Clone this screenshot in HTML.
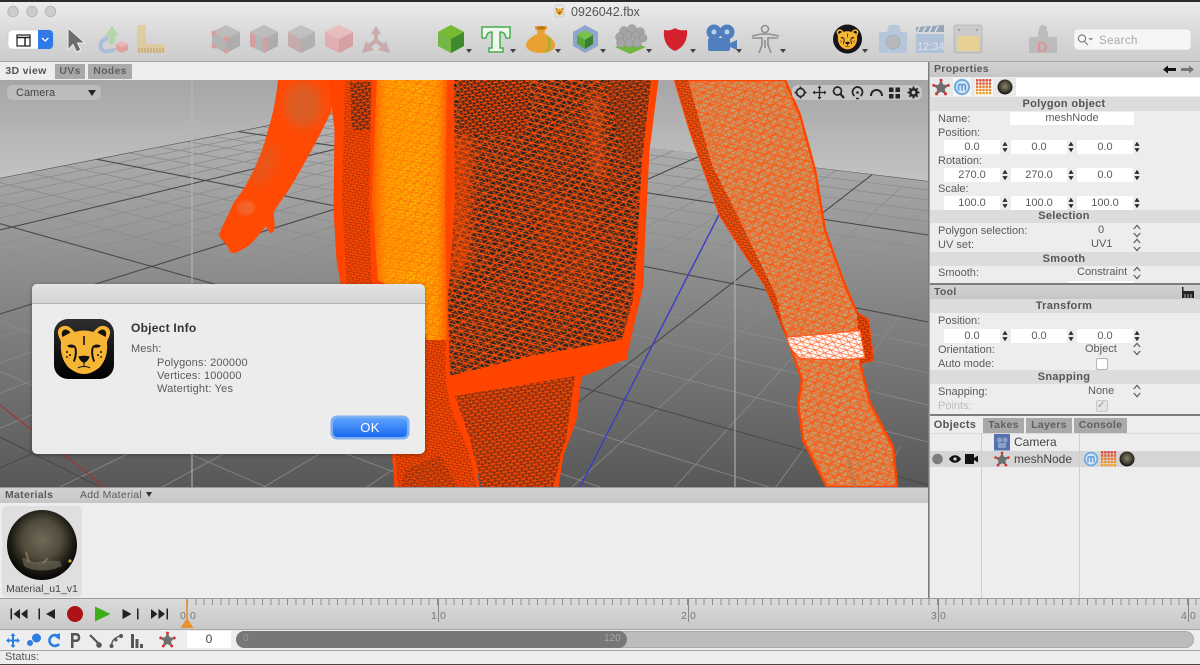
<!DOCTYPE html>
<html><head><meta charset="utf-8"><title>0926042.fbx</title>
<style>
html,body{margin:0;padding:0;background:#222;width:1200px;height:665px;overflow:hidden}
#w{position:relative;width:1200px;height:665px;overflow:hidden;background:#ebebeb;font-family:"Liberation Sans",sans-serif;filter:blur(.35px)}
#w div,#w span,#w svg.a{position:absolute}
.t{font:11px/14px "Liberation Sans",sans-serif;color:#5a5a5a;white-space:nowrap}
.b{font:bold 11px/14px "Liberation Sans",sans-serif;color:#555;white-space:nowrap;letter-spacing:.3px}
.h{left:930px;width:270px;background:#dcdcdc;text-align:center;padding-right:2px;box-sizing:border-box}
.f{background:#fff;text-align:center;font:11px/14px "Liberation Sans",sans-serif;color:#5a5a5a;height:14px}
.tab{background:#a9a9a9;text-align:center;font:bold 10.5px/15px "Liberation Sans",sans-serif;color:#5f5f5f;letter-spacing:.3px}
.hd{background:linear-gradient(#d2d2d2,#c6c6c6)}
</style></head><body>
<div id="w">
<!-- title + toolbar -->
<div style="left:0;top:0;width:1200px;height:61px;background:linear-gradient(#ececec,#d6d6d6 60%,#cdcdcd);border-top:2px solid #2b2b2b;box-sizing:border-box"></div>
<div style="left:0;top:61px;width:1200px;height:1px;background:#a5a5a5"></div>
<div class="t" style="left:571px;top:5px;font-size:12.5px;color:#555">0926042.fbx</div>
<div style="left:0;top:62px;width:928px;height:18px;background:#ededed"></div>
<div class="tab" style="left:0;top:64px;width:52px;height:15px;background:#ededed;color:#555">3D view</div>
<div class="tab" style="left:55px;top:64px;width:30px;height:15px">UVs</div>
<div class="tab" style="left:88px;top:64px;width:44px;height:15px">Nodes</div>

<!-- viewport -->
<svg class="a" style="left:0;top:0" width="1200" height="665" viewBox="0 0 1200 665">
<defs>
<filter id="sf" x="-40%" y="-40%" width="180%" height="180%"><feGaussianBlur stdDeviation="5"/></filter>
<filter id="sf2" x="-40%" y="-40%" width="180%" height="180%"><feGaussianBlur stdDeviation="1.6"/></filter>
<linearGradient id="sky" x1="0" y1="80" x2="0" y2="190" gradientUnits="userSpaceOnUse"><stop offset="0" stop-color="#a6a6a6"/><stop offset="1" stop-color="#c6c6c6"/></linearGradient>
<linearGradient id="floor" x1="0" y1="120" x2="0" y2="487" gradientUnits="userSpaceOnUse"><stop offset="0" stop-color="#b4b4b4"/><stop offset=".45" stop-color="#8a8a8a"/><stop offset="1" stop-color="#585858"/></linearGradient>
<clipPath id="vp"><rect x="0" y="80" width="928" height="407"/></clipPath>
<clipPath id="fl"><polygon points="341,111 928,181 928,487 0,487 0,178"/></clipPath>
<pattern id="mD" width="11" height="10" patternUnits="userSpaceOnUse" patternTransform="rotate(14)"><rect width="11" height="10" fill="#2a2725"/><path d="M0 0H11M0 5H11M0 10H11M0 0L5.5 5L11 0M0 10L5.5 5L11 10" stroke="#ff4a00" stroke-width="1" fill="none"/></pattern>
<pattern id="mD2" width="7" height="6.4" patternUnits="userSpaceOnUse" patternTransform="rotate(-8)"><rect width="7" height="6.4" fill="#2a2220"/><path d="M0 0H7M0 3.2H7M0 6.4H7M0 0L3.5 3.2L7 0M0 6.4L3.5 3.2L7 6.4" stroke="#ff4700" stroke-width=".85" fill="none"/></pattern>
<pattern id="mP" width="6" height="5.4" patternUnits="userSpaceOnUse" patternTransform="rotate(10)"><rect width="6" height="5.4" fill="#7a2a08"/><path d="M0 0H6M0 2.7H6M0 5.4H6M0 0L3 2.7L6 0M0 5.4L3 2.7L6 5.4" stroke="#ff4600" stroke-width="1" fill="none"/></pattern>
<pattern id="mY" width="7" height="6.2" patternUnits="userSpaceOnUse" patternTransform="rotate(6)"><rect width="7" height="6.2" fill="#fbc800"/><path d="M0 0H7M0 3.1H7M0 6.2H7M0 0L3.5 3.1L7 0M0 6.2L3.5 3.1L7 6.2" stroke="#ff8400" stroke-width=".8" fill="none"/></pattern>
<pattern id="mA" width="11" height="9.6" patternUnits="userSpaceOnUse" patternTransform="rotate(20)"><rect width="11" height="9.6" fill="#c39c6c"/><path d="M0 0H11M0 4.8H11M0 9.6H11M0 0L5.5 4.8L11 0M0 9.6L5.5 4.8L11 9.6" stroke="#f8601c" stroke-width=".8" fill="none"/></pattern>
<pattern id="mL" width="15" height="13" patternUnits="userSpaceOnUse" patternTransform="rotate(-31)"><path d="M0 0H15M0 6.5H15M0 13H15M0 0L7.5 6.5L15 0M0 13L7.5 6.5L15 13" stroke="#ff5510" stroke-width=".8" fill="none"/></pattern>
<pattern id="mW" width="10" height="8.6" patternUnits="userSpaceOnUse" patternTransform="rotate(16)"><rect width="10" height="8.6" fill="#fff"/><path d="M0 0H10M0 4.3H10M0 8.6H10M0 0L5 4.3L10 0M0 8.6L5 4.3L10 8.6" stroke="#ff6a30" stroke-width=".7" fill="none"/></pattern>
<linearGradient id="yG" x1="372" y1="0" x2="448" y2="0" gradientUnits="userSpaceOnUse"><stop offset="0" stop-color="#ff5500" stop-opacity=".95"/><stop offset=".2" stop-color="#ff8c00" stop-opacity=".5"/><stop offset=".55" stop-color="#ff9500" stop-opacity=".18"/><stop offset=".85" stop-color="#ff8000" stop-opacity=".4"/><stop offset="1" stop-color="#ff4a00" stop-opacity=".9"/></linearGradient>
<radialGradient id="ball" cx=".5" cy=".42" r=".55"><stop offset="0" stop-color="#6f6a58"/><stop offset=".5" stop-color="#504b3b"/><stop offset=".82" stop-color="#1c1a14"/><stop offset="1" stop-color="#0a0907"/></radialGradient>
<radialGradient id="ball2" cx=".5" cy=".45" r=".55"><stop offset="0" stop-color="#8a836a"/><stop offset=".6" stop-color="#4a4536"/><stop offset="1" stop-color="#0f0e0b"/></radialGradient>
<symbol id="star" viewBox="0 0 20 20"><polygon points="10,1.5 12.6,7.3 18.8,8 14.2,12.2 15.5,18.5 10,15.3 4.5,18.5 5.8,12.2 1.2,8 7.4,7.3" fill="#6e6e6e"/><g fill="#dc2f2f"><circle cx="10" cy="2.5" r="1.7"/><circle cx="18" cy="8.2" r="1.7"/><circle cx="15" cy="17.6" r="1.7"/><circle cx="5" cy="17.6" r="1.7"/><circle cx="2" cy="8.2" r="1.7"/></g></symbol>
<symbol id="micon" viewBox="0 0 20 20"><circle cx="10" cy="10" r="9" fill="#6fa9dd"/><circle cx="10" cy="10" r="6.8" fill="#d4e6f6"/><path d="M6.2 14V7.5M6.2 9C6.2 6.5 10 6.5 10 9V14M10 9C10 6.5 13.8 6.5 13.8 9V14" stroke="#5c9ad6" stroke-width="1.7" fill="none"/></symbol>
<symbol id="gridi" viewBox="0 0 18 18"><g stroke-width="2.6" stroke-dasharray="2.6 1" fill="none"><path d="M0 1.5H18" stroke="#df3b2e"/><path d="M0 5.1H18" stroke="#e5562a"/><path d="M0 8.7H18" stroke="#ec7326"/><path d="M0 12.3H18" stroke="#f08c22"/><path d="M0 15.9H18" stroke="#f4a01f"/></g></symbol>
<symbol id="spin" viewBox="0 0 8 14"><path d="M4 0L7.5 5.5H.5ZM4 14L.5 8.5H7.5Z" fill="#2b2b2b"/></symbol>
<symbol id="ud" viewBox="0 0 8 14"><path d="M.8 5L4 1.4L7.2 5M.8 9L4 12.6L7.2 9" fill="none" stroke="#666" stroke-width="1.3"/></symbol>
<symbol id="tri" viewBox="0 0 6 4"><path d="M0 0H6L3 4Z" fill="#444"/></symbol>
<symbol id="chee" viewBox="0 0 60 60">
<path d="M13 7C7 6 3 10 4 15C5 19 7 21 7 24C6 34 9 42 14 48C20 53 25 55 30 55C35 55 40 53 46 48C51 42 54 34 53 24C53 21 55 19 56 15C57 10 53 6 47 7C43 8 41 12 39 13C33 11 27 11 21 13C19 12 17 8 13 7Z" fill="#f6b535"/>
<path d="M12 10.5C8 10.5 7 14 8.5 18C11 16.5 14 15 16.5 13.5C15 12 13.5 10.5 12 10.5ZM48 10.5C52 10.5 53 14 51.5 18C49 16.5 46 15 43.5 13.5C45 12 46.5 10.5 48 10.5Z" fill="#111"/>
<path d="M29.2 17H30.8V26H29.2Z" fill="#111"/>
<path d="M13 27C15.5 25 19 25 22 27.5C20 29 16 29.5 13 27ZM47 27C44.5 25 41 25 38 27.5C40 29 44 29.5 47 27Z" fill="#111"/>
<path d="M20 28C21.5 32 21 37 19 42L20.5 43C23 38 23.5 32 22 28ZM40 28C38.5 32 39 37 41 42L39.5 43C37 38 36.5 32 38 28Z" fill="#111"/>
<path d="M24.5 37.5C27 36.5 33 36.5 35.5 37.5C35 40.5 32.5 43 30 44C27.5 43 25 40.5 24.5 37.5Z" fill="#111"/>
<path d="M30 44V47M24 49C27 47 33 47 36 49" stroke="#111" stroke-width="1.1" fill="none"/>
<g fill="#111"><circle cx="13" cy="33" r="1"/><circle cx="16" cy="36" r="1"/><circle cx="13" cy="38" r=".9"/><circle cx="47" cy="33" r="1"/><circle cx="44" cy="36" r="1"/><circle cx="47" cy="38" r=".9"/></g>
</symbol>
<linearGradient id="iconbg" x1="0" y1="0" x2="0" y2="1"><stop offset="0" stop-color="#2e2e2e"/><stop offset=".6" stop-color="#111"/><stop offset="1" stop-color="#000"/></linearGradient>
</defs>

<g clip-path="url(#vp)">
<rect x="0" y="80" width="928" height="407" fill="url(#sky)"/>
<polygon points="341,111 928,181 928,487 0,487 0,178" fill="url(#floor)"/>
<g clip-path="url(#fl)" fill="none">
<path stroke="#8b8b8b" stroke-width=".8" d="M0 72.8L928 190M0 77.9L928 200M0 83.5L928 211M0 89.1L928 222M0 102.9L928 249M0 110.6L928 264M0 119.3L928 281M0 129.1L928 300M0 152.6L928 346M0 166.4L928 373M0 182.8L928 405M0 201.7L928 442M0 249.8L769 487M0 282L600 487M0 321.4L433 487M0 371.5L266 487"/>
<path stroke="#8b8b8b" stroke-width=".8" d="M900 3.4L0 187M900 5.5L0 196M900 8L0 207M900 10.4L0 218M900 16.3L0 244M900 19.5L0 258M900 23.3L0 275M900 27.3L0 293M900 37.3L0 337M900 43.1L0 363M900 50L0 393M900 57.7L0 428M900 77.6L60 487M900 90.7L162 487M900 106.7L264 487M900 127L367 487M900 188.4L572 487M900 239L675 487M900 315L776 487M900 447L879 487"/>
<path stroke="#4a4a4a" stroke-width="1.1" d="M0 68.2L928 181M0 95.8L928 235M0 140.3L928 322M0 223.7L928 485M0 437L100 487M900 1.4L0 178M900 13.1L0 230M900 32L0 314M900 66.8L0 468M900 153L469 487"/>
</g>
<path d="M192 80V487M735 80V487" stroke="#b9b9b9" stroke-width="1" fill="none"/>
<path d="M0 405L105 487" stroke="#a33232" stroke-width="1.1" fill="none"/>
<path d="M725 203L580 487" stroke="#3c3cc8" stroke-width="1.4" fill="none"/>

<!-- left arm -->
<path d="M278 80C276 100 272 118 268 130C262 155 252 175 243 190L233 204C229 214 222 226 219 235C222 242 228 244 230 252C236 255 240 250 245 248C250 246 258 236 266 226C268 232 272 236 274 230C276 224 273 218 274 212C278 204 285 196 290 188C304 165 320 135 331 112L335 80Z" fill="#ff4a04"/>
<g filter="url(#sf)"><ellipse cx="303" cy="105" rx="18" ry="22" fill="#a87a58" opacity=".42"/><ellipse cx="265" cy="165" rx="8" ry="22" fill="#a87a58" opacity=".28" transform="rotate(25 265 165)"/></g>
<ellipse cx="246" cy="208" rx="9" ry="7" fill="#e88a68" opacity=".4" filter="url(#sf2)"/>
<!-- torso + legs -->
<path d="M330 80L336 130L335 210L338 260L345 300L355 340L385 400L393 440L396 487H473L478 472L482 487H557L562 455L575 420L580 376L625 358L628 345L636 310L642 285L643 250L648 150L657 80Z" fill="#ff4500"/>
<path d="M345 80H372L369 200L372 290H347L342 200Z" fill="url(#mP)" opacity=".7"/>
<path d="M350 82H371L370 130H352Z" fill="url(#mD2)" opacity=".85"/>
<path d="M377 80H447L445 200L447 340H427L415 300L378 280L372 200Z" fill="url(#mY)"/>
<path d="M377 80H447L445 200L447 340H427L415 300L378 280L372 200Z" fill="url(#mL)" opacity=".7"/>
<path d="M377 80H447L445 200L447 340H427L415 300L378 280L372 200Z" fill="url(#yG)"/>
<g filter="url(#sf)"><ellipse cx="408" cy="130" rx="15" ry="38" fill="#ff8a00" opacity=".3"/><ellipse cx="405" cy="245" rx="18" ry="28" fill="#ff8000" opacity=".32"/></g>
<path d="M454 80H651L642 160L637 250L633 300L622 340L530 356L450 376L448 300L455 200Z" fill="url(#mD)"/>
<path d="M454 80H651L642 160L637 250L633 300L622 340L530 356L450 376L448 300L455 200Z" fill="url(#mL)" opacity=".65"/>
<path d="M458 80H530L525 135L462 135Z" fill="url(#mD2)"/>
<path d="M605 80H651L642 160L625 160Z" fill="url(#mD2)" opacity=".75"/>
<g filter="url(#sf)"><path d="M450 135L472 135L470 260L450 290Z" fill="#ff4a00" opacity=".55"/><path d="M590 95L600 95L604 180L592 175Z" fill="#ff5a1a" opacity=".5"/><path d="M540 190L600 210L590 300L530 300Z" fill="#ff4a00" opacity=".12"/></g>
<path d="M380 380L427 340H447L450 395L470 450L476 487H396Z" fill="url(#mP)" opacity=".8"/>
<path d="M455 396L575 376L566 440L553 487H482L470 440Z" fill="url(#mD2)" opacity=".68"/>
<path d="M405 470L440 455L458 487H402Z" fill="url(#mD2)" opacity=".4"/>
<path d="M450 392C480 378 560 372 627 358M447 340C448 360 446 380 450 395C452 410 462 430 470 450C474 465 476 475 478 487" stroke="#ff4300" stroke-width="3.4" fill="none"/>
<path d="M330 80L336 130L335 210L338 260L345 300L355 340L385 400L393 440L396 487M657 80L648 150L643 250L642 285L636 310L628 345L625 358L580 376L575 420L562 455L557 487" stroke="#ff4300" stroke-width="3" fill="none"/>
<!-- right arm -->
<path d="M675 80L690 130L720 215L765 285L787 337L802 380L798 403L803 440L827 487H897L893 447L870 403L860 363L873 360L868 320L857 313L843 280L825 230L815 170L800 115L785 80Z" fill="url(#mA)"/>
<path d="M675 80L690 130L720 215L765 285L787 337L802 380L798 403L803 440L827 487H897L893 447L870 403L860 363L873 360L868 320L857 313L843 280L825 230L815 170L800 115L785 80Z" fill="url(#mL)" stroke="#ff4500" stroke-width="2.4"/>
<path d="M675 80L690 130L720 215L765 285L785 335L776 295L742 225L712 165L688 80Z" fill="url(#mP)" opacity=".85"/>
<path d="M857 313L868 320L873 360L860 363L858 330Z" fill="url(#mP)"/>
<path d="M787 337C810 335 840 333 860 330L865 358C845 360 815 360 800 358C792 352 788 345 787 337Z" fill="url(#mW)" stroke="#ff5a20" stroke-width="1.2"/>
<path d="M848 458C850 470 852 478 856 487" stroke="#a87b4e" stroke-width="3" fill="none" opacity=".6"/>
</g>
<rect x="0" y="487" width="928" height="1" fill="#9a9a9a"/>
<!-- vertical separators -->
<rect x="928" y="62" width="1.6" height="537" fill="#7c7c7c"/>
</svg>

<!-- camera dropdown -->
<div style="left:7px;top:85px;width:94px;height:15px;background:#bcbcbc;border-radius:5px"></div>
<div class="t" style="left:16px;top:86px;color:#444">Camera</div>
<div style="left:88px;top:90px;width:0;height:0;border-left:4.5px solid transparent;border-right:4.5px solid transparent;border-top:6px solid #222"></div>
<div style="left:792px;top:85px;width:130px;height:15px;background:#c9c9c9;border-radius:6px;opacity:.88"></div>

<!-- right panel -->
<div style="left:930px;top:62px;width:270px;height:536px;background:#ededed"></div>
<div class="hd" style="left:930px;top:62px;width:270px;height:15px"></div>
<div class="b" style="left:934px;top:62px;font-size:10.5px;color:#5a5a5a">Properties</div>
<div style="left:1016px;top:78px;width:184px;height:18px;background:#fff"></div>
<div style="left:930px;top:78px;width:86px;height:18px;background:#e9e9e9"></div>
<div style="left:953px;top:78px;width:18px;height:18px;background:#f6f6f6"></div>
<div style="left:975px;top:78px;width:18px;height:18px;background:#f6f6f6"></div>
<div class="h b" style="top:97px;height:14px">Polygon object</div>
<div class="t" style="left:938px;top:112px">Name:</div>
<div class="f" style="left:1010px;top:112px;width:124px;height:13px;line-height:13px">meshNode</div>
<div class="t" style="left:938px;top:126px">Position:</div>
<div class="f" style="left:944px;top:140px;width:56px">0.0</div><div class="f" style="left:1011px;top:140px;width:56px">0.0</div><div class="f" style="left:1077px;top:140px;width:56px">0.0</div>
<div class="t" style="left:938px;top:154px">Rotation:</div>
<div class="f" style="left:944px;top:168px;width:56px">270.0</div><div class="f" style="left:1011px;top:168px;width:56px">270.0</div><div class="f" style="left:1077px;top:168px;width:56px">0.0</div>
<div class="t" style="left:938px;top:182px">Scale:</div>
<div class="f" style="left:944px;top:196px;width:56px">100.0</div><div class="f" style="left:1011px;top:196px;width:56px">100.0</div><div class="f" style="left:1077px;top:196px;width:56px">100.0</div>
<div class="h b" style="top:210px;height:13px;line-height:13px">Selection</div>
<div class="t" style="left:938px;top:224px">Polygon selection:</div>
<div class="t" style="left:1098px;top:223px">0</div>
<div class="t" style="left:938px;top:238px">UV set:</div>
<div class="t" style="left:1091px;top:237px">UV1</div>
<div class="h b" style="top:252px;height:14px">Smooth</div>
<div class="t" style="left:938px;top:266px">Smooth:</div>
<div class="t" style="left:1077px;top:265px">Constraint</div>
<div style="left:1068px;top:281px;width:66px;height:2px;background:#fff"></div>
<div style="left:930px;top:283px;width:270px;height:2px;background:#7c7c7c"></div>

<div class="hd" style="left:930px;top:285px;width:270px;height:14px"></div>
<div class="b" style="left:934px;top:285px;font-size:10.5px;color:#5a5a5a">Tool</div>
<div class="h b" style="top:299px;height:14px">Transform</div>
<div class="t" style="left:938px;top:314px">Position:</div>
<div class="f" style="left:944px;top:329px;width:56px">0.0</div><div class="f" style="left:1011px;top:329px;width:56px">0.0</div><div class="f" style="left:1077px;top:329px;width:56px">0.0</div>
<div class="t" style="left:938px;top:343px">Orientation:</div>
<div class="t" style="left:1085px;top:342px">Object</div>
<div class="t" style="left:938px;top:357px">Auto mode:</div>
<div style="left:1096px;top:358px;width:10px;height:10px;background:#fff;border:1px solid #b5b5b5;border-radius:2px"></div>
<div class="h b" style="top:370px;height:14px">Snapping</div>
<div class="t" style="left:938px;top:385px">Snapping:</div>
<div class="t" style="left:1088px;top:384px">None</div>
<div class="t" style="left:938px;top:399px;color:#bcbcbc">Points:</div>
<div style="left:1096px;top:400px;width:10px;height:10px;background:#e4e4e4;border:1px solid #c8c8c8;border-radius:2px"></div>
<div class="t" style="left:1097px;top:399px;color:#999;font-size:10px">✓</div>
<div style="left:930px;top:414px;width:270px;height:2px;background:#7c7c7c"></div>

<div class="tab" style="left:930px;top:418px;width:50px;height:15px;background:#ededed;color:#555;font-size:11px">Objects</div>
<div class="tab" style="left:983px;top:418px;width:41px;height:15px">Takes</div>
<div class="tab" style="left:1026px;top:418px;width:46px;height:15px">Layers</div>
<div class="tab" style="left:1074px;top:418px;width:53px;height:15px">Console</div>
<div style="left:930px;top:433px;width:270px;height:1px;background:#dcdcdc"></div>
<div style="left:930px;top:451px;width:270px;height:16px;background:#d5d5d5"></div>
<div style="left:981px;top:433px;width:1px;height:165px;background:#cfcfcf"></div>
<div style="left:1079px;top:433px;width:1px;height:165px;background:#cfcfcf"></div>
<div class="t" style="left:1014px;top:435px;font-size:12px;color:#444">Camera</div>
<div class="t" style="left:1014px;top:452px;font-size:12px;color:#444">meshNode</div>

<!-- materials -->
<div class="hd" style="left:0;top:488px;width:928px;height:15px"></div>
<div class="b" style="left:5px;top:488px;color:#5a5a5a;font-size:10.5px">Materials</div>
<div class="t" style="left:80px;top:488px;font-size:10.5px;letter-spacing:.25px">Add Material</div>
<div style="left:146px;top:492px;width:0;height:0;border-left:3.5px solid transparent;border-right:3.5px solid transparent;border-top:5px solid #333"></div>
<div style="left:0;top:503px;width:928px;height:95px;background:#ededed"></div>
<div style="left:2px;top:506px;width:80px;height:91px;background:#dfdfdf;border-radius:5px"></div>
<div class="t" style="left:2px;top:582px;width:80px;text-align:center;font-size:10.5px;color:#444">Material_u1_v1</div>

<!-- timeline -->
<div style="left:0;top:598px;width:1200px;height:31px;background:linear-gradient(#dadada,#c9c9c9);border-top:1px solid #9b9b9b;box-sizing:border-box"></div>
<div style="left:187px;top:599px;width:1013px;height:6px;background:repeating-linear-gradient(90deg,#8b8b8b 0,#8b8b8b 1px,transparent 1px,transparent 8.333px)"></div>
<div style="left:437.5px;top:599px;width:1px;height:23px;background:#888"></div>
<div style="left:687.5px;top:599px;width:1px;height:23px;background:#888"></div>
<div style="left:937.5px;top:599px;width:1px;height:23px;background:#888"></div>
<div style="left:1187.5px;top:599px;width:1px;height:23px;background:#888"></div>
<div class="t" style="left:431px;top:609px;font-size:10.5px;color:#777">1</div><div class="t" style="left:440px;top:609px;font-size:10.5px;color:#777">0</div>
<div class="t" style="left:681px;top:609px;font-size:10.5px;color:#777">2</div><div class="t" style="left:690px;top:609px;font-size:10.5px;color:#777">0</div>
<div class="t" style="left:931px;top:609px;font-size:10.5px;color:#777">3</div><div class="t" style="left:940px;top:609px;font-size:10.5px;color:#777">0</div>
<div class="t" style="left:1181px;top:609px;font-size:10.5px;color:#777">4</div><div class="t" style="left:1190px;top:609px;font-size:10.5px;color:#777">0</div>
<div class="t" style="left:180px;top:609px;font-size:10.5px;color:#777">0</div><div class="t" style="left:190px;top:609px;font-size:10.5px;color:#777">0</div>
<div style="left:0;top:629px;width:1200px;height:1px;background:#a8a8a8"></div>
<div style="left:0;top:630px;width:1200px;height:20px;background:#ededed"></div>
<div class="f" style="left:187px;top:631px;width:44px;height:17px;font-size:12px;line-height:17px;color:#444">0</div>
<div style="left:236px;top:631px;width:958px;height:17px;background:#bcbcbc;border:1px solid #aaa;border-radius:9px;box-sizing:border-box"></div>
<div style="left:236px;top:631px;width:391px;height:17px;background:#777;border-radius:9px"></div>
<div class="t" style="left:243px;top:632px;font-size:10px;color:#969696">0</div>
<div class="t" style="left:604px;top:632px;font-size:10px;color:#a8a8a8">120</div>
<div style="left:0;top:650px;width:1200px;height:1px;background:#a8a8a8"></div>
<div style="left:0;top:651px;width:1200px;height:13px;background:#ededed"></div>
<div class="t" style="left:5px;top:650px;color:#555">Status:</div>
<div style="left:0;top:664px;width:1200px;height:1px;background:#4a4a4a"></div>

<!-- icons overlay -->
<svg class="a" style="left:0;top:0" width="1200" height="665" viewBox="0 0 1200 665">
<!-- traffic -->
<g fill="#cdcdcd" stroke="#b6b6b6"><circle cx="13" cy="11.5" r="5.2"/><circle cx="32" cy="11.5" r="5.2"/><circle cx="50.5" cy="11.5" r="5.2"/></g>
<use href="#chee" x="555" y="6" width="9" height="11"/>
<rect x="555" y="5" width="9" height="12" rx="1.5" fill="none" stroke="#bbb" stroke-width=".6"/>
<!-- segment -->
<rect x="8" y="30" width="45" height="19" rx="4" fill="#fff" stroke="#c4c4c4" stroke-width=".6"/>
<path d="M38 30H49a4 4 0 0 1 4 4V45a4 4 0 0 1-4 4H38Z" fill="#2f79e8"/>
<path d="M42 38l3.2 3l3.2-3" stroke="#fff" stroke-width="1.2" fill="none"/>
<rect x="17" y="35" width="13" height="11" fill="#fff" stroke="#1c1c1c" stroke-width="1.2"/>
<path d="M17 37.5H30M25 37.5V46" stroke="#1c1c1c" stroke-width="1.4"/>
<!-- arrow -->
<path d="M68 28L68 50L73 44.5L76.5 52L81 50L77.5 43H85Z" fill="#6c6c6c" stroke="#efefef" stroke-width="1"/>
<!-- disabled group -->
<g opacity=".72">
<path d="M112 26L119 36H115V44H109V36H105Z" fill="#a7d49a"/>
<path d="M108 38C100 40 98 48 104 51C108 52 112 50 115 50" fill="none" stroke="#9cb7d8" stroke-width="4"/>
<path d="M122 41L128 44V50L122 53L116 50V44Z" fill="#e88f8f"/><path d="M116 44L122 47L128 44L122 41Z" fill="#f0b0b0"/>
<path d="M137 25H146V44H165V53H137Z" fill="#e4c88e"/>
<path d="M139 53V48M142 53V48M145 53V48M148 53V48M151 53V48M154 53V48M157 53V48M160 53V48M163 53V48" stroke="#a98a50" stroke-width="1"/>
<path d="M226 25L240 32V46L226 53L212 46V32Z" fill="#a9a9a9"/><path d="M226 25L240 32L226 39L212 32Z" fill="#b2b2b2"/><path d="M240 32V46L226 53V39Z" fill="#9f9f9f"/>
<g fill="#d88c8c"><circle cx="214" cy="33" r="2.6"/><circle cx="226" cy="39" r="2.6"/><circle cx="214" cy="46" r="2.6"/><circle cx="226" cy="51" r="2.6"/></g>
<path d="M264 25L278 32V46L264 53L250 46V32Z" fill="#a9a9a9"/><path d="M264 25L278 32L264 39L250 32Z" fill="#b2b2b2"/><path d="M278 32V46L264 53V39Z" fill="#9f9f9f"/>
<path d="M250 32L255 34.5V48.5L250 46ZM263 38V53L267 51V37Z" fill="#d88c8c"/>
<path d="M301 25L315 32V46L301 53L288 46V32Z" fill="#b4b4b4"/><path d="M301 25L315 32L301 39L288 32Z" fill="#b8b8b8"/><path d="M315 32V46L301 53V39Z" fill="#a3a3a3"/><path d="M288 32L301 39V53L288 46Z" fill="#c09c9c"/>
<path d="M339 25L353 32V46L339 53L325 46V32Z" fill="#e8a0a3"/><path d="M339 25L353 32L339 39L325 32Z" fill="#efb4b6"/><path d="M353 32V46L339 53V39Z" fill="#d98f92"/>
<path d="M376 26L381 34H378V40L384 44L386 41L390 53L378 50L381 47L376 43L371 47L374 50L362 53L366 41L368 44L374 40V34H371Z" fill="#c79a9d"/>
</g>
<!-- green cube -->
<path d="M451 25L464 32V46L451 53L438 46V32Z" fill="#6aa83c"/><path d="M451 25L464 32L451 39L438 32Z" fill="#77bb35"/><path d="M464 32V46L451 53V39Z" fill="#3d8b2a"/><path d="M438 32L451 39V53L438 46Z" fill="#74b746"/>
<!-- T -->
<path d="M482 27H510V38H506C505 33 503 32 500 32V48H503V52H489V48H492V32C489 32 487 33 486 38H482Z" fill="#f1f6ee" stroke="#44b04a" stroke-width="1.5"/>
<!-- pot -->
<path d="M535 26H547V29C545 30 544 32 545 34C551 37 555 41 555 45C555 50 549 53 541 53C533 53 526 50 526 45C526 41 531 37 537 34C538 32 537 30 535 29Z" fill="#e8a030"/>
<path d="M548 37C551 42 549 49 546 52" stroke="#8cb83a" stroke-width="2" fill="none"/>
<ellipse cx="541" cy="28" rx="4.5" ry="1.6" fill="#b9741a"/>
<!-- blue hex -->
<path d="M585 25L598 32V46L585 53L573 46V32Z" fill="#8ea6cf"/>
<path d="M585 30L593 35V44L585 49L577 44V35Z" fill="#5aa53a"/><path d="M585 30L593 35L585 40L577 35Z" fill="#7ac04c"/><path d="M593 35V44L585 49V40Z" fill="#3a8030"/>
<!-- spheres -->
<path d="M630 41L646 47L630 54L615 47Z" fill="#71b83c"/>
<g fill="#a5a5a5" stroke="#888" stroke-width=".4"><circle cx="624" cy="31" r="4.5"/><circle cx="632" cy="29" r="4.5"/><circle cx="640" cy="32" r="4.5"/><circle cx="620" cy="37" r="4.5"/><circle cx="628" cy="36" r="4.5"/><circle cx="636" cy="36" r="4.5"/><circle cx="643" cy="38" r="4"/><circle cx="621" cy="43" r="4.5"/><circle cx="629" cy="43" r="4.5"/><circle cx="637" cy="43" r="4.5"/></g>
<!-- shield -->
<path d="M664 30C669 31 672 30 675 28C678 30 682 31 687 30C688 40 683 48 675 51C667 48 663 40 664 30Z" fill="#d3222e"/>
<!-- movie camera -->
<g fill="#4f7fbf"><circle cx="714" cy="32" r="7.5"/><circle cx="727" cy="32" r="7.5"/><rect x="708" y="38" width="22" height="13" rx="2"/><path d="M730 43L737 40V50L730 47Z"/></g>
<circle cx="714" cy="32" r="2.5" fill="#bcd0ea"/><circle cx="727" cy="32" r="2.5" fill="#bcd0ea"/>
<!-- figure -->
<g fill="none" stroke="#8f8f8f" stroke-width="1.6"><circle cx="765" cy="29" r="3.5"/><path d="M752 36L761 34H769L779 36M752 38L762 38L762 45L759 53M778 38L768 38L768 45L771 53M765 40V48"/></g>
<!-- cheetah -->
<ellipse cx="847.5" cy="39" rx="14.5" ry="14.5" fill="#151515"/>
<use href="#chee" x="835" y="26" width="25" height="26"/>
<g opacity=".85">
<!-- photo camera -->
<path d="M879 32H887L889 25H899L901 32H907V53H879Z" fill="#b1c5dc"/><circle cx="893" cy="42" r="7" fill="#b5b5b5" stroke="#98a9bc"/>
<!-- clap -->
<rect x="916" y="34" width="28" height="19" fill="#a9bfd9"/><path d="M916 27L944 25V32H916Z" fill="#8a9cb2"/><path d="M920 27L917 32M926 27L923 32M932 26L929 32M938 26L935 32" stroke="#dde3ea" stroke-width="1.5"/>
<text x="917" y="50" font-family="Liberation Sans" font-size="11" fill="#dfe7f0">12:34</text>
<!-- yellow -->
<rect x="954" y="25" width="28" height="28" rx="2" fill="#c8c8c8" stroke="#b4b4b4"/><rect x="957" y="36" width="22" height="15" fill="#ead08a"/><circle cx="959" cy="30" r="1.2" fill="#999"/><circle cx="977" cy="30" r="1.2" fill="#999"/>
<!-- weight -->
<path d="M1038 31H1048V37H1056C1057 37 1057 38 1057 39V53H1029V39C1029 38 1029 37 1031 37H1038Z" fill="#b8b8b8"/><circle cx="1043" cy="29" r="4" fill="#b8b8b8"/>
<text x="1037" y="52" font-family="Liberation Sans" font-weight="bold" font-size="15" fill="#e08a8f">D</text>
</g>
<!-- dropdown tris -->
<use href="#tri" x="466" y="49" width="6" height="4"/><use href="#tri" x="510" y="49" width="6" height="4"/><use href="#tri" x="555" y="49" width="6" height="4"/><use href="#tri" x="600" y="49" width="6" height="4"/><use href="#tri" x="646" y="49" width="6" height="4"/><use href="#tri" x="690" y="49" width="6" height="4"/><use href="#tri" x="736" y="49" width="6" height="4"/><use href="#tri" x="780" y="49" width="6" height="4"/><use href="#tri" x="862" y="49" width="6" height="4"/>
<!-- search -->
<rect x="1074" y="29" width="117" height="21" rx="4" fill="#f6f6f6" stroke="#d2d2d2" stroke-width=".6"/>
<circle cx="1082" cy="38.5" r="3.6" fill="none" stroke="#777" stroke-width="1.1"/><path d="M1084.5 41.5L1088 45M1089 38l1.7 1.7l1.7-1.7" stroke="#777" stroke-width="1.1" fill="none"/>
<text x="1099" y="44" font-family="Liberation Sans" font-size="11.5" fill="#aaa" letter-spacing=".4">Search</text>
<!-- viewport tool icons -->
<g fill="none" stroke="#252525" stroke-width="1.7">
<circle cx="800.5" cy="92.5" r="4"/><path d="M800.5 86.5V89M800.5 96V98.5M794.5 92.5H797M804 92.5H806.5"/>
<path d="M819.5 87V98M814 92.5H825" stroke-width="1.3"/><path d="M819.5 85.5L821.5 88H817.5ZM819.5 99.5L821.5 97H817.5ZM812.5 92.5L815 90.5V94.5ZM826.5 92.5L824 90.5V94.5Z" fill="#252525" stroke="none"/>
<circle cx="837.5" cy="91" r="4"/><path d="M840.5 94L844 98" stroke-width="2.2"/>
<path d="M860.5 96A5 5 0 1 0 854.5 96" /><circle cx="857.5" cy="92.5" r="1.3" fill="#252525" stroke="none"/><path d="M856 98.5H859" stroke-width="1.4"/>
<path d="M871 96C871 88 882 88 882 96" stroke-width="2"/>
<path d="M889 87.5H893.5V92H889ZM895.5 87.5H900V92H895.5ZM889 94H893.5V98.5H889ZM895.5 94H900V98.5H895.5Z" fill="#252525" stroke="none"/>
<circle cx="913.5" cy="92.5" r="3.2" stroke-width="2.6"/><path d="M913.5 86.5V88.3M913.5 96.7V98.5M907.5 92.5H909.3M917.7 92.5H919.5M909.3 88.3L910.5 89.5M916.5 95.5L917.7 96.7M917.7 88.3L916.5 89.5M910.5 95.5L909.3 96.7" stroke-width="1.8"/>
</g>
<!-- props header arrows -->
<path d="M1163 69.5L1168 65.5V68H1176V71H1168V73.5Z" fill="#111"/>
<path d="M1194 69.5L1189 65.5V68H1181V71H1189V73.5Z" fill="#777"/>
<use href="#star" x="932" y="78" width="18" height="18"/>
<use href="#micon" x="953" y="78" width="18" height="18"/>
<use href="#gridi" x="976" y="78.5" width="16" height="17"/>
<circle cx="1005" cy="87" r="7.5" fill="url(#ball2)"/>
<!-- spinners -->
<g>
<use href="#spin" x="1002" y="141" width="6" height="12"/><use href="#spin" x="1068" y="141" width="6" height="12"/><use href="#spin" x="1134" y="141" width="6" height="12"/>
<use href="#spin" x="1002" y="169" width="6" height="12"/><use href="#spin" x="1068" y="169" width="6" height="12"/><use href="#spin" x="1134" y="169" width="6" height="12"/>
<use href="#spin" x="1002" y="197" width="6" height="12"/><use href="#spin" x="1068" y="197" width="6" height="12"/><use href="#spin" x="1134" y="197" width="6" height="12"/>
<use href="#spin" x="1002" y="330" width="6" height="12"/><use href="#spin" x="1068" y="330" width="6" height="12"/><use href="#spin" x="1134" y="330" width="6" height="12"/>
</g>
<use href="#ud" x="1133" y="224" width="8" height="14"/><use href="#ud" x="1133" y="238" width="8" height="14"/><use href="#ud" x="1133" y="266" width="8" height="14"/><use href="#ud" x="1133" y="342" width="8" height="14"/><use href="#ud" x="1133" y="384" width="8" height="14"/>
<!-- tool factory -->
<path d="M1182 287H1183.5V291H1194V298H1182Z" fill="#222"/><path d="M1185 294V298M1188 294V298M1191 294V298" stroke="#ccc" stroke-width=".8"/>
<!-- objects rows -->
<rect x="994" y="434" width="16" height="16.5" fill="#5572ad"/>
<g fill="#8c9fc8"><circle cx="999.5" cy="440" r="2.6"/><circle cx="1005" cy="440" r="2.6"/><rect x="998" y="443" width="8" height="5"/></g>
<use href="#star" x="994" y="451" width="16" height="16"/>
<circle cx="937.5" cy="459" r="5.3" fill="#7d7d7d"/>
<path d="M949 459C952 454 958 454 961 459C958 464 952 464 949 459Z" fill="#111"/><circle cx="955" cy="459" r="1.6" fill="#d5d5d5"/>
<path d="M965 454H974V464H965ZM974 458L978 455.5V462.5L974 460Z" fill="#111"/>
<use href="#micon" x="1083" y="451" width="16" height="16"/>
<use href="#gridi" x="1101" y="451" width="16" height="16"/>
<circle cx="1127" cy="459" r="7.5" fill="url(#ball2)"/>
<!-- material ball -->
<circle cx="42" cy="545" r="35" fill="url(#ball)"/>
<path d="M22 558C28 558 32 563 38 562C44 560 52 561 60 561L62 566C50 572 32 572 24 566Z" fill="#7a7460" opacity=".55"/>
<path d="M26 552L29 562M48 558L43 563" stroke="#b89a70" stroke-width="2.2" opacity=".45"/>
<circle cx="70" cy="561" r="1.6" fill="#c8b020"/>
<!-- playback -->
<g fill="#222">
<path d="M10.5 608.5H12V619.5H10.5ZM20 609V619L13.5 614ZM27.5 609V619L21 614Z"/>
<path d="M38.5 608.5H40V619.5H38.5ZM55 609V619L46 614Z"/>
<path d="M122.5 609V619L131.5 614ZM137 608.5H138.5V619.5H137Z"/>
<path d="M151 609V619L157.5 614ZM158.5 609V619L165 614ZM166.5 608.5H168V619.5H166.5Z"/>
</g>
<circle cx="75" cy="614" r="8" fill="#ad1218"/>
<path d="M95 606.5L110.5 614L95 621.5Z" fill="#3ead1a"/>
<path d="M187 599V622" stroke="#e58a2c" stroke-width="1.5"/><path d="M187 618L193.5 628H180.5Z" fill="#e8912f"/>
<!-- bottom tools -->
<g fill="none" stroke="#2a7fe0" stroke-width="2">
<path d="M13 635V646M7.5 640.5H18.5"/><path d="M13 633L15.5 636H10.5ZM13 648L15.5 645H10.5ZM6 640.5L9 638V643ZM20 640.5L17 638V643Z" fill="#2a7fe0" stroke="none"/>
<path d="M59 637A5.4 5.4 0 1 0 59 644" stroke-width="2.6"/><path d="M54 636L60 633V640Z" fill="#2a7fe0" stroke="none"/>
</g>
<circle cx="30" cy="643" r="3" fill="#2a7fe0"/><circle cx="36.5" cy="638" r="4.5" fill="#2a7fe0"/>
<path d="M71 633H76.5C81.5 633 81.5 642 76.5 642H73.5V648H71Z M73.5 635.5V639.5H76C78.5 639.5 78.5 635.5 76 635.5Z" fill="#555" fill-rule="evenodd"/>
<path d="M90 635L99 644" stroke="#555" stroke-width="2.2"/><circle cx="99" cy="645" r="2.8" fill="#555"/>
<g fill="none" stroke="#555" stroke-width="1.4"><path d="M111.5 646C111.5 640 116 637 120.5 636"/></g><circle cx="111.5" cy="646" r="2" fill="#555"/><circle cx="121" cy="636" r="2" fill="#555"/><circle cx="116" cy="640" r="1.5" fill="#555"/>
<path d="M131 634H134V648H131ZM135.5 639H138.5V648H135.5ZM140 644H143V648H140Z" fill="#555"/>
<use href="#star" x="159" y="631" width="17" height="17"/>
</svg>

<!-- dialog -->
<div style="left:32px;top:284px;width:393px;height:170px;background:#ececec;border-radius:5px;box-shadow:0 1px 4px rgba(0,0,0,.35);overflow:hidden">
  <div style="left:0;top:0;width:393px;height:19px;background:linear-gradient(#e4e4e4,#d3d3d3);border-bottom:1px solid #b0b0b0"></div>
  <svg class="a" style="left:22px;top:35px" width="60" height="60" viewBox="0 0 60 60"><rect width="60" height="60" rx="14" fill="url(#iconbg)"/><use href="#chee" x="0" y="0" width="60" height="60"/></svg>
  <div class="b" style="left:99px;top:37px;font-size:12px;color:#333;letter-spacing:.25px">Object Info</div>
  <div class="t" style="left:99px;top:58px;letter-spacing:.1px">Mesh:</div>
  <div class="t" style="left:125px;top:72px;letter-spacing:.17px">Polygons: 200000</div>
  <div class="t" style="left:125px;top:85px;letter-spacing:.17px">Vertices: 100000</div>
  <div class="t" style="left:125px;top:98px;letter-spacing:.17px">Watertight: Yes</div>
  <div style="left:301px;top:134px;width:74px;height:19px;background:linear-gradient(#5ea3fc,#1b68f0);border-radius:4px;box-shadow:0 0 0 2.5px #7fb0ee;color:#fff;text-align:center;font:13px/19px 'Liberation Sans',sans-serif;letter-spacing:.3px">OK</div>
</div>
</div>
</body></html>
